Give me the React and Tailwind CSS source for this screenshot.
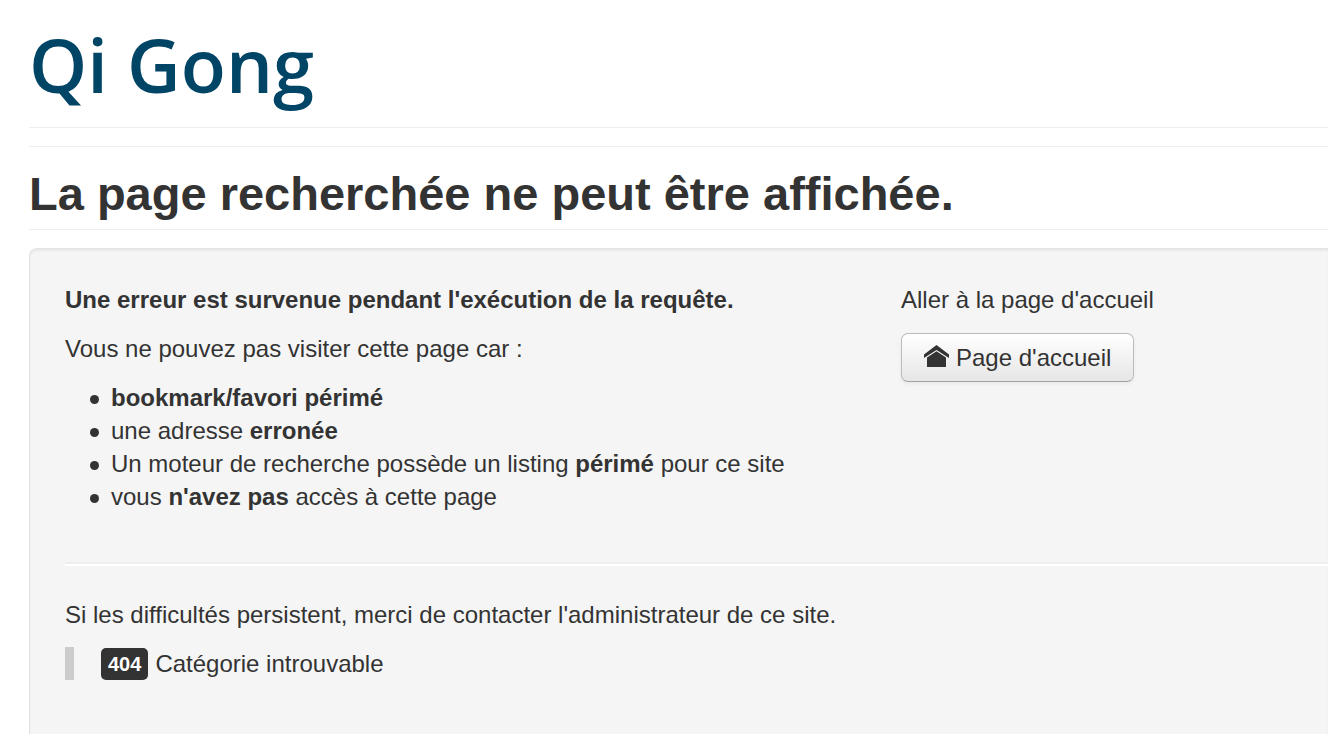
const reasons = [
  <strong>bookmark/favori périmé</strong>,
  <>une adresse <strong>erronée</strong></>,
  <>Un moteur de recherche possède un listing <strong>périmé</strong> pour ce site</>,
  <>vous <strong>n'avez pas</strong> accès à cette page</>,
];

function HomeIcon() {
  return (
    <svg className="mb-1 w-[25px] h-[22px] shrink-0" viewBox="0 0 25 22" fill="#333333" aria-hidden="true">
      <path d="M12.5 0 L25 9.4 V13 L12.5 5 L0 13 V9.4 Z" />
      <path d="M12.5 6.3 L22 12.4 V22 H3 V12.4 Z" />
    </svg>
  );
}

export default function App() {
  return (
    <div className="h-screen overflow-hidden bg-white pl-[29px] font-['Liberation_Sans',Arial,sans-serif] text-2xl leading-[33px] text-[#333333]">
      {/* Site header */}
      <header className="border-b border-[#eeeeee] pt-[11px] pb-2">
        <a href="/" className="block font-['Open_Sans',sans-serif] text-[74px] leading-[108px] font-semibold text-[#004466]">
          Qi Gong
        </a>
      </header>

      <main className="mt-[18px] border-t border-[#eeeeee]">
        <h1 className="mb-[18px] border-b border-[#eeeeee] pt-4 pb-1 text-[47px] leading-[62px] font-bold">
          La page recherchée ne peut être affichée.
        </h1>

        <div className="min-h-[520px] rounded-l-[8px] border border-r-0 border-[#e3e3e3] bg-[#f5f5f5] pt-[34px] pl-[35px] shadow-[inset_0_2px_2px_rgba(0,0,0,0.05)]">
          <div className="grid grid-cols-[836fr_427fr]">
            <section>
              <p className="mb-4 font-bold">Une erreur est survenue pendant l'exécution de la requête.</p>
              <p className="mb-4">Vous ne pouvez pas visiter cette page car :</p>
              <ul className="pl-[46px]">
                {reasons.map((reason, i) => (
                  <li
                    key={i}
                    className="before:mr-3 before:-ml-[21px] before:inline-block before:size-[9px] before:rounded-full before:bg-[#333333] before:align-middle"
                  >
                    {reason}
                  </li>
                ))}
              </ul>
            </section>
            <section>
              <p className="mb-[17px]">Aller à la page d'accueil</p>
              <button
                type="button"
                className="flex h-[49px] items-center gap-[7px] rounded-[7px] border border-[#bbbbbb] border-b-[#a2a2a2] bg-linear-to-b from-white to-[#e6e6e6] px-[22px] shadow-[inset_0_2px_0_rgba(255,255,255,0.2),0_2px_4px_rgba(0,0,0,0.05)]"
              >
                <HomeIcon />
                Page d'accueil
              </button>
            </section>
          </div>

          <hr className="mt-[49px] mb-8 h-1 border-t-2 border-b-2 border-t-[#eeeeee] border-b-white" />

          <p className="mb-4">Si les difficultés persistent, merci de contacter l'administrateur de ce site.</p>
          <blockquote className="flex items-center gap-[7px] border-l-[9px] border-[#cccccc] pl-[27px]">
            <span className="rounded-[5px] bg-[#333333] px-[7px] text-xl leading-8 font-bold text-white">404</span>
            Catégorie introuvable
          </blockquote>
        </div>
      </main>
    </div>
  );
}
